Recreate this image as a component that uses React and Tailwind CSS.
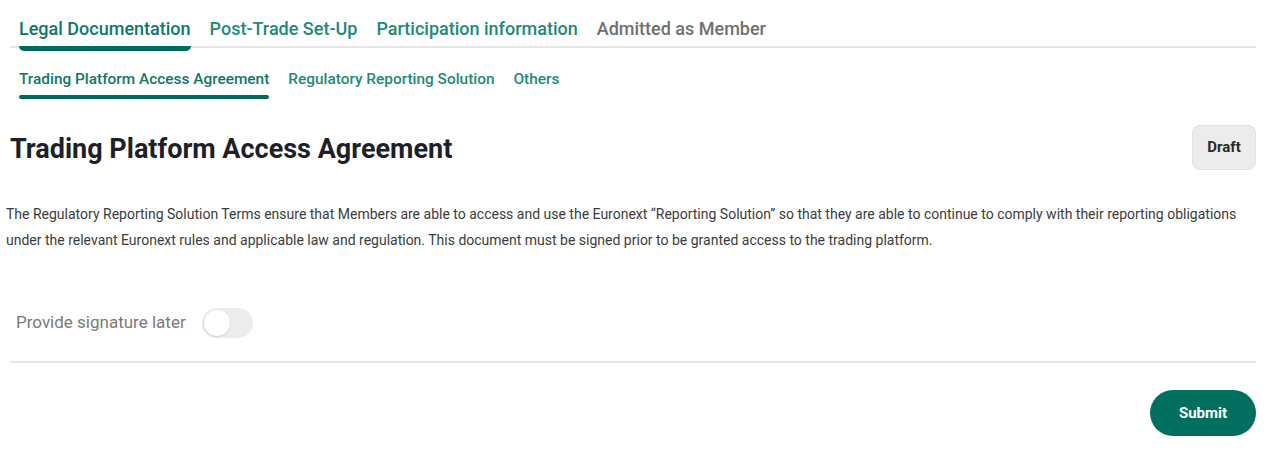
export default function App() {
  const font = { fontFamily: "Roboto, 'Noto Sans', sans-serif" };
  return (
    <div className="w-[1274px] h-[461px] bg-white pl-[10px] pr-[18px]" style={font}>
      {/* top tabs */}
      <div className="relative flex gap-[19px] pl-[9px] h-[48px] pt-[10px] items-center border-b-2 border-[#e6e6e6] text-[18px] font-medium">
        <div className="relative h-full flex items-center text-[#0f7868]">
          Legal Documentation
          <div className="absolute left-0 right-0 -bottom-[5px] h-[5px] rounded-b-md bg-[#006b5c]"></div>
        </div>
        <div className="h-full flex items-center text-[#1d8a78]">Post-Trade Set-Up</div>
        <div className="h-full flex items-center text-[#1d8a78]">Participation information</div>
        <div className="h-full flex items-center text-[#707070]">Admitted as Member</div>
      </div>
      {/* sub tabs */}
      <div className="flex gap-[19px] pl-[9px] h-[51px] pt-[20px] text-[15.4px] font-medium leading-[22px]">
        <div className="relative h-[31px] text-[#0f7868]">
          Trading Platform Access Agreement
          <div className="absolute left-0 right-0 bottom-0 h-[4px] rounded-full bg-[#006b5c]"></div>
        </div>
        <div className="text-[#1d8a78]">Regulatory Reporting Solution</div>
        <div className="text-[#1d8a78]">Others</div>
      </div>
      {/* heading */}
      <div className="flex items-center justify-between mt-[26px]">
        <h1 className="text-[27px] font-bold text-[#1e1f29] leading-none pt-[3px]">Trading Platform Access Agreement</h1>
        <div className="w-[64px] h-[45px] rounded-lg bg-[#ececec] border border-[#e2e2e2] flex items-center justify-center text-[15px] font-bold text-[#2a2a2a]">
          Draft
        </div>
      </div>
      {/* body */}
      <p className="mt-[31px] -ml-[4px] text-[14px] leading-[26px] text-[#3c3c3c]">
        The Regulatory Reporting Solution Terms ensure that Members are able to access and use the Euronext “Reporting Solution” so that they are able to continue to comply with their reporting obligations under the relevant Euronext rules and applicable law and regulation. This document must be signed prior to be granted access to the trading platform.
      </p>
      {/* toggle */}
      <div className="flex items-center gap-[16px] pl-[6px] mt-[55px] h-[30px]">
        <span className="text-[17px] text-[#7a7a7a]">Provide signature later</span>
        <div className="w-[51px] h-[30px] rounded-full bg-[#ececec] flex items-center pl-[2px]">
          <div className="w-[26px] h-[26px] rounded-full bg-white shadow-sm"></div>
        </div>
      </div>
      <div className="mt-[23px] border-t-2 border-[#e6e6e6]"></div>
      <div className="flex justify-end mt-[27px]">
        <div className="w-[106px] h-[46px] rounded-full bg-[#006f5f] flex items-center justify-center text-white text-[15px] font-bold">
          Submit
        </div>
      </div>
    </div>
  );
}
